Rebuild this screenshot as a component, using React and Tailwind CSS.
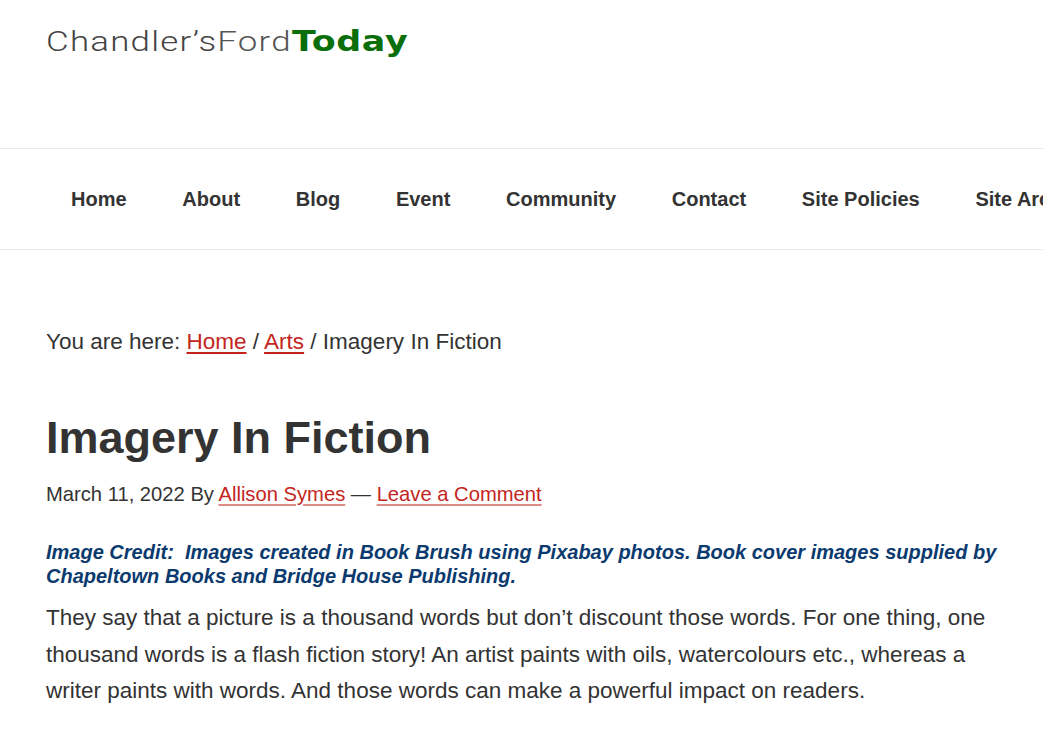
import React from "react";

const navItems = ["Home", "About", "Blog", "Event", "Community", "Contact", "Site Policies", "Site Archive"];

export default function App() {
  return (
    <div className="min-h-[732px] w-[1043px] overflow-hidden bg-white text-[#333]" style={{ fontFamily: '"Liberation Sans", Arial, sans-serif' }}>
      <header className="h-[148px] pl-[46px] pt-[22px]">
        <div className="origin-left scale-x-[1.245] whitespace-nowrap text-[28px] leading-[40px]" style={{ fontFamily: 'Roboto, "Liberation Sans", sans-serif' }}>
          <span className="font-light tracking-[1px] text-[#444]">Chandler’s</span>
          <span className="font-light tracking-[1px] text-[#555]">Ford</span>
          <span className="font-bold tracking-[0.5px] text-[#0a6e0a]" style={{ fontFamily: '"DejaVu Sans", "Liberation Sans", sans-serif' }}>Today</span>
        </div>
      </header>
      <nav className="border-y border-[#eaeaea]">
        <ul className="flex h-[100px] items-center whitespace-nowrap pl-[43.2px]">
          {navItems.map((item) => (
            <li key={item} className="px-[27.85px] text-[20px] font-bold text-[#333]">{item}</li>
          ))}
        </ul>
      </nav>
      <main className="w-[1001px] pl-[46px]">
        <div className="mt-[77px] text-[22.5px] leading-[30px]">
          You are here: <a className="text-[#c3251d] underline decoration-[#c3251d] underline-offset-[3px]">Home</a> / <a className="text-[#c3251d] underline underline-offset-[3px]">Arts</a> / Imagery In Fiction
        </div>
        <h1 className="mt-[54px] text-[45px] font-bold leading-[54px] text-[#333]">Imagery In Fiction</h1>
        <p className="mt-[15px] text-[20.2px] leading-[28px]">
          March 11, 2022 By <a className="text-[#c3251d] underline decoration-[#e08a85] underline-offset-[3px]">Allison Symes</a> — <a className="text-[#c3251d] underline decoration-[#e08a85] underline-offset-[3px]">Leave a Comment</a>
        </p>
        <p className="mt-[32px] text-[20px] font-bold italic leading-[24px] text-[#0b3a6f]">
          Image Credit:{"\u00a0"} Images created in Book Brush using Pixabay photos. Book cover images supplied by Chapeltown Books and Bridge House Publishing.
        </p>
        <p className="mt-[12px] text-[22.5px] leading-[36.5px]">
          They say that a picture is a thousand words but don’t discount those words. For one thing, one thousand words is a flash fiction story! An artist paints with oils, watercolours etc., whereas a writer paints with words. And those words can make a powerful impact on readers.
        </p>
      </main>
    </div>
  );
}
